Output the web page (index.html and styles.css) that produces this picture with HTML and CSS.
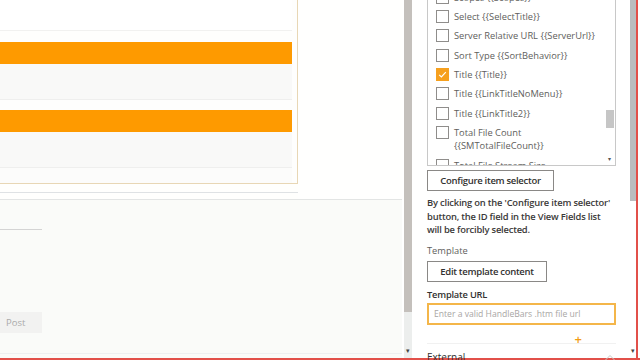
FILE: index.html
```html
<!DOCTYPE html>
<html lang="en">
<head>
<meta charset="utf-8">
<title>Web part properties</title>
<link rel="stylesheet" href="styles.css">
</head>
<body>
<div class="frame">
  <div class="main">
    <div class="top">
      <div class="card-col">
        <div class="card">
          <div class="card-head"></div>
          <div class="row"><div class="bar"></div><div class="row-body"></div></div>
          <div class="row"><div class="bar"></div><div class="row-body"></div></div>
          <div class="card-foot"></div>
        </div>
        <div class="card-shadow"></div>
      </div>
      <div class="strip"></div>
    </div>
    <div class="bottom">
      <div class="comment-line"></div>
      <button class="post">Post</button>
      <div class="bottom-edge"></div>
    </div>
  </div>

  <div class="vscroll left-scroll">
    <div class="thumb"></div>
    <div class="track"><span class="arrow">&#9662;</span></div>
  </div>

  <div class="panel">
    <div class="listbox">
      <div class="list">
        <label class="item"><span class="box"></span><span class="txt">Scopes {{Scopes}}</span></label>
        <label class="item"><span class="box"></span><span class="txt">Select {{SelectTitle}}</span></label>
        <label class="item"><span class="box"></span><span class="txt">Server Relative URL {{ServerUrl}}</span></label>
        <label class="item"><span class="box"></span><span class="txt">Sort Type {{SortBehavior}}</span></label>
        <label class="item"><span class="box checked"><svg viewBox="0 0 13 13" width="13" height="13"><path d="M3.2 6.8 L5.4 9 L9.8 4.2" fill="none" stroke="#fff" stroke-width="1.2"/></svg></span><span class="txt">Title {{Title}}</span></label>
        <label class="item"><span class="box"></span><span class="txt">Title {{LinkTitleNoMenu}}</span></label>
        <label class="item"><span class="box"></span><span class="txt">Title {{LinkTitle2}}</span></label>
        <label class="item"><span class="box"></span><span class="txt">Total File Count {{SMTotalFileCount}}</span></label>
        <label class="item"><span class="box"></span><span class="txt">Total File Stream Size</span></label>
      </div>
      <div class="lb-scroll">
        <div class="lb-thumb"></div>
        <span class="lb-arrow">&#9662;</span>
      </div>
    </div>

    <button class="btn btn-config">Configure item selector</button>
    <p class="note">By clicking on the 'Configure item selector' button, the ID field in the View Fields list will be forcibly selected.</p>
    <div class="label">Template</div>
    <button class="btn btn-edit">Edit template content</button>
    <div class="label strong">Template URL</div>
    <input class="url" type="text" placeholder="Enter a valid HandleBars .htm file url">
    <div class="plus-row"><span class="plus">+</span></div>
    <div class="section">
      <span class="section-title">External</span>
      <svg class="chev" viewBox="0 0 12 8" width="12" height="8"><path d="M1 6.5 L6 1.5 L11 6.5" fill="none" stroke="#c8c6c4" stroke-width="1"/></svg>
    </div>
  </div>

  <div class="vscroll outer-scroll">
    <div class="thumb"></div>
    <div class="track"><span class="arrow">&#9662;</span></div>
  </div>
  <div class="red-edge"></div>
  <div class="white-edge"></div>
</div>
</body>
</html>
```

FILE: styles.css
```css
* { box-sizing: border-box; }
html, body {
  margin: 0;
  padding: 0;
  width: 640px;
  height: 360px;
  overflow: hidden;
  background: #ffffff;
  font-family: "Open Sans", "Noto Sans", "Liberation Sans", sans-serif;
}
.frame {
  display: flex;
  width: 640px;
  height: 360px;
  border-bottom: 2px solid #e2504a;
}

/* ---------- left main area ---------- */
.main {
  width: 402px;
  flex: none;
  display: flex;
  flex-direction: column;
  background: #fafbf9;
}
.top {
  height: 200px;
  flex: none;
  display: flex;
  background: #fffffd;
  border-bottom: 1px solid #e3e5e4;
}
.card-col {
  width: 298px;
  display: flex;
  flex-direction: column;
}
.card {
  height: 184px;
  flex: none;
  border-right: 1px solid #e8d7b5;
  border-bottom: 1px solid #e8d7b5;
  padding-right: 5px;
  background: #fefefd;
}
.card-head {
  height: 31px;
  border-bottom: 1px solid #f1f1f0;
  background: #ffffff;
}
.row {
  padding-top: 11px;
  border-bottom: 1px solid #efefee;
}
.row + .row { padding-top: 10px; }
.bar {
  height: 22px;
  background: #fe9a00;
}
.row-body {
  height: 35px;
  background: #f9f9f8;
}
.card-foot {
  height: 15px;
  background: #fcfcfb;
}
.card-shadow {
  flex: none;
  margin-top: 8px;
  height: 1px;
  background: #dfe2e4;
}
.strip {
  flex: 1;
  background: #fffffe;
}
.bottom {
  flex: 1;
  display: flex;
  flex-direction: column;
  align-items: flex-start;
  padding-top: 29px;
}
.bottom > * { flex-shrink: 0; }
.comment-line {
  width: 42px;
  height: 1px;
  background: #d4d4d4;
}
.post {
  margin-top: 82px;
  width: 42px;
  height: 21px;
  border: 0;
  background: #f2f2f1;
  color: #aaaaaa;
  font-family: inherit;
  font-size: 9.5px;
  text-align: left;
  padding: 0 0 0 6px;
}
.bottom-edge {
  margin-top: auto;
  margin-bottom: 4px;
  width: 100%;
  height: 1px;
  background: #eef0f1;
}

/* ---------- scrollbars ---------- */
.vscroll {
  flex: none;
  display: flex;
  flex-direction: column;
}
.vscroll .thumb { flex: none; }
.left-scroll {
  width: 10px;
  padding-left: 2px;
  background: #ffffff;
}
.left-scroll .thumb {
  height: 312px;
  background: #c4c0bc;
}
.left-scroll .track {
  flex: 1;
  background: #eceeed;
}
.track {
  display: flex;
  align-items: flex-end;
  justify-content: center;
}
.arrow {
  font-size: 7px;
  line-height: 10px;
  color: #444;
  margin-bottom: 2px;
}
.outer-scroll {
  width: 6px;
}
.outer-scroll .thumb {
  height: 201px;
  background: #babdbf;
}
.outer-scroll .track {
  flex: 1;
  background: #ffffff;
}
.red-edge {
  flex: none;
  width: 2px;
  background: #e2504a;
}
.white-edge {
  flex: none;
  width: 2px;
  background: #ffffff;
}

/* ---------- property panel ---------- */
.panel {
  flex: none;
  width: 218px;
  padding: 0 14px 0 15px;
  display: flex;
  flex-direction: column;
  align-items: stretch;
  background: #ffffff;
  color: #323130;
  font-size: 9.3px;
}
.panel > * { flex-shrink: 0; }
.listbox {
  width: 189px;
  height: 166px;
  border: 1px solid #c8c8c8;
  border-top: 0;
  display: flex;
  overflow: hidden;
}
.list {
  flex: 1;
  margin-top: -12.6px;
  padding-left: 8px;
}
.item {
  display: flex;
  align-items: flex-start;
  padding: 3.2px 0;
  line-height: 13px;
  color: #605e5c;
}
.box {
  flex: none;
  width: 13px;
  height: 13px;
  border: 1px solid #8f8d8b;
  background: #fff;
  margin-right: 5px;
  display: flex;
}
.box.checked {
  border-color: #f6a01e;
  background: #f6a01e;
}
.box.checked svg { margin: -1px; }
.txt { display: block; }
.lb-scroll {
  width: 9px;
  margin-right: 1px;
  display: flex;
  flex-direction: column;
  align-items: center;
}
.lb-thumb {
  flex: none;
  margin-top: 110px;
  width: 8px;
  height: 18px;
  background: #c6c6c6;
}
.lb-arrow {
  margin-top: auto;
  margin-bottom: 2px;
  font-size: 6px;
  line-height: 8px;
  color: #555;
}
.btn {
  align-self: flex-start;
  height: 21px;
  border: 1px solid #8a8886;
  background: #ffffff;
  color: #323130;
  font-family: inherit;
  font-size: 9.5px;
  font-weight: 600;
  letter-spacing: -0.3px;
  padding: 0;
}
.btn-config {
  margin-top: 4px;
  width: 127px;
}
.btn-edit {
  margin-top: 3px;
  width: 120px;
}
.note {
  margin: 5px 0 0 0;
  padding-right: 1px;
  font-size: 9.4px;
  line-height: 13.5px;
  font-weight: 600;
  letter-spacing: -0.2px;
  color: #3b3a39;
}
.label {
  margin-top: 7.5px;
  line-height: 13.5px;
  color: #605e5c;
}
.label.strong {
  margin-top: 6px;
  font-weight: 600;
  letter-spacing: -0.2px;
  color: #323130;
}
.url {
  margin-top: 2px;
  width: 189px;
  height: 22px;
  border: 2px solid #f4b64a;
  padding: 0 0 0 5px;
  font-family: inherit;
  font-size: 8.6px;
  color: #323130;
  outline: none;
}
.url::placeholder { color: #a8a6a4; }
.plus-row {
  display: flex;
  justify-content: flex-end;
  align-items: flex-end;
  padding-right: 34px;
  height: 19px;
  border-bottom: 1px solid #f1f1f1;
}
.plus {
  color: #f39c12;
  font-size: 13px;
  line-height: 8px;
  font-weight: 600;
}
.section {
  display: flex;
  justify-content: space-between;
  align-items: center;
  padding-top: 6px;
  padding-right: 0;
}
.section-title {
  font-size: 10px;
  color: #323130;
  line-height: 14px;
}
.chev { margin-top: 1px; }
```
